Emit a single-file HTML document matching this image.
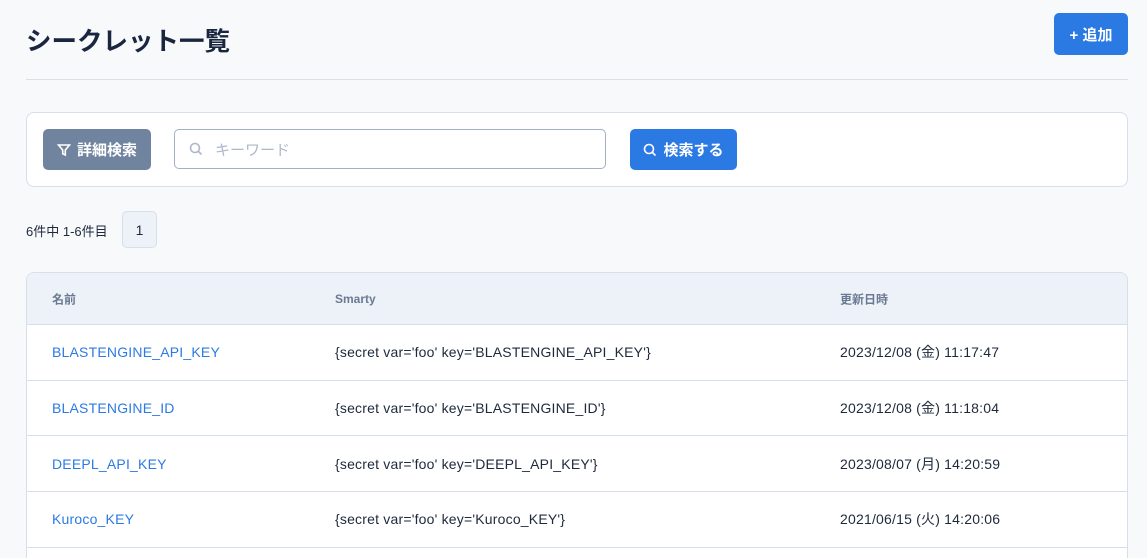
<!DOCTYPE html>
<html><head><meta charset="utf-8"><style>
*{box-sizing:border-box;margin:0;padding:0}
body{width:1147px;height:558px;overflow:hidden;background:#f8f9fb;font-family:"Liberation Sans","Noto Sans CJK JP",sans-serif;color:#1e293b;position:relative}
h1{position:absolute;left:26px;top:21px;font-size:25.5px;font-weight:700;color:#1a2540}
.add{position:absolute;left:1054px;top:13px;width:74px;height:42px;background:#2b7ae4;color:#fff;border-radius:5px;font-size:15px;font-weight:700;display:flex;align-items:center;justify-content:center}
.hr{position:absolute;left:26px;right:19px;top:79px;border-top:1px solid #d9dfe7}
.card{position:absolute;left:26px;top:112px;width:1102px;height:75px;background:#fff;border:1px solid #d6dfeb;border-radius:8px}
.b1{position:absolute;left:43px;top:129px;width:108px;height:41px;background:#71849f;color:#fff;border-radius:5px;font-size:15px;font-weight:700;display:flex;align-items:center;justify-content:center;gap:6px}
.inp{position:absolute;left:174px;top:129px;width:432px;height:40px;border:1px solid #a3afc4;border-radius:5px;background:#fff;color:#aeb8c8;font-size:15px;display:flex;align-items:center;padding-left:14px;gap:12px}
.b2{position:absolute;left:630px;top:129px;width:107px;height:41px;background:#2b7ae4;color:#fff;border-radius:5px;font-size:15px;font-weight:700;display:flex;align-items:center;justify-content:center;gap:6px}
.cnt{position:absolute;left:26px;top:221px;font-size:13px;color:#1e293b}
.pg{position:absolute;left:122px;top:211px;width:35px;height:37px;border:1px solid #d6dfeb;background:#edf2f8;border-radius:5px;font-size:14px;display:flex;align-items:center;justify-content:center}
.tbl{position:absolute;left:26px;top:272px;width:1102px;height:286px;background:#fff;border:1px solid #d6dfeb;border-bottom:none;border-radius:8px 8px 0 0;overflow:hidden}
.th{height:52px;background:#edf2f9;border-bottom:1px solid #d6dfeb;position:relative;font-size:12px;font-weight:700;color:#6b7a92}
.tr{height:55.7px;border-bottom:1px solid #d6dfeb;position:relative;font-size:14px;letter-spacing:0.2px}
.th span,.tr span{position:absolute;top:50%;transform:translateY(-50%)}
.c1{left:25px}.c2{left:308px}.c3{left:813px}
.tr .c1{color:#2b7ae4}
</style></head><body>
<h1>シークレット一覧</h1>
<div class="add">+ 追加</div>
<div class="hr"></div>
<div class="card"></div>
<div class="b1"><svg width="14" height="14" viewBox="0 0 14 14" fill="none" stroke="#fff" stroke-width="1.6"><path d="M1.5 2h11L8.3 7v5l-2.6-1.3V7z"/></svg>詳細検索</div>
<div class="inp"><svg width="14" height="14" viewBox="0 0 14 14" fill="none" stroke="#aeb8c8" stroke-width="1.6"><circle cx="6" cy="6" r="4.5"/><path d="M9.5 9.5l3 3"/></svg>キーワード</div>
<div class="b2"><svg width="14" height="14" viewBox="0 0 14 14" fill="none" stroke="#fff" stroke-width="1.6"><circle cx="6" cy="6" r="4.5"/><path d="M9.5 9.5l3 3"/></svg>検索する</div>
<div class="cnt">6件中 1-6件目</div>
<div class="pg">1</div>
<div class="tbl">
<div class="th"><span class="c1">名前</span><span class="c2">Smarty</span><span class="c3">更新日時</span></div>
<div class="tr"><span class="c1">BLASTENGINE_API_KEY</span><span class="c2">{secret var='foo' key='BLASTENGINE_API_KEY'}</span><span class="c3">2023/12/08 (金) 11:17:47</span></div>
<div class="tr"><span class="c1">BLASTENGINE_ID</span><span class="c2">{secret var='foo' key='BLASTENGINE_ID'}</span><span class="c3">2023/12/08 (金) 11:18:04</span></div>
<div class="tr"><span class="c1">DEEPL_API_KEY</span><span class="c2">{secret var='foo' key='DEEPL_API_KEY'}</span><span class="c3">2023/08/07 (月) 14:20:59</span></div>
<div class="tr"><span class="c1">Kuroco_KEY</span><span class="c2">{secret var='foo' key='Kuroco_KEY'}</span><span class="c3">2021/06/15 (火) 14:20:06</span></div>
</div>
</body></html>
